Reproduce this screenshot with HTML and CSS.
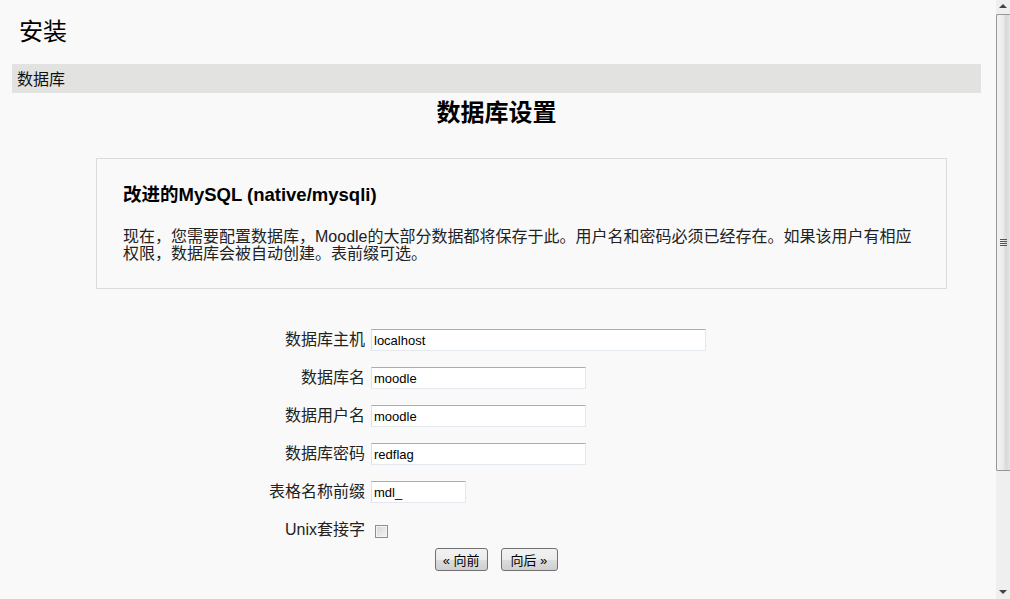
FILE: index.html
```html
<!DOCTYPE html>
<html lang="zh">
<head>
  <meta charset="UTF-8">
  <title>安装</title>
  <link rel="stylesheet" href="styles.css">
</head>
<body>
<div class="window">
  <div class="page">
    <h1 class="title">安装</h1>
    <div class="stage">数据库</div>
    <h2 class="heading">数据库设置</h2>

    <div class="info">
      <h3>改进的MySQL (native/mysqli)</h3>
      <p>现在，您需要配置数据库，Moodle的大部分数据都将保存于此。用户名和密码必须已经存在。如果该用户有相应权限，数据库会被自动创建。表前缀可选。</p>
    </div>

    <form class="dbform">
      <label for="dbhost">数据库主机</label>
      <div><input id="dbhost" class="w-long" type="text" value="localhost"></div>
      <label for="dbname">数据库名</label>
      <div><input id="dbname" class="w-mid" type="text" value="moodle"></div>
      <label for="dbuser">数据用户名</label>
      <div><input id="dbuser" class="w-mid" type="text" value="moodle"></div>
      <label for="dbpass">数据库密码</label>
      <div><input id="dbpass" class="w-mid" type="text" value="redflag"></div>
      <label for="prefix">表格名称前缀</label>
      <div><input id="prefix" class="w-short" type="text" value="mdl_"></div>
      <label for="socket">Unix套接字</label>
      <div><input id="socket" class="check" type="checkbox"></div>
    </form>

    <div class="buttons">
      <button type="button" class="prev">« 向前</button>
      <button type="button" class="next">向后 »</button>
    </div>
  </div>

  <div class="scrollbar">
    <div class="arrow up"></div>
    <div class="thumb"><span class="grip"></span></div>
    <div class="track"></div>
    <div class="arrow down"></div>
  </div>
</div>
</body>
</html>
```

FILE: styles.css
```css
html, body {
  margin: 0;
  height: 100%;
}
body {
  font-family: "Liberation Sans", "Noto Sans CJK SC", sans-serif;
  color: #222;
  background-color: #f9f9f9;
}
.window {
  display: flex;
  height: 599px;
  overflow: hidden;
}
.page {
  flex: 1;
  padding: 0 15px 0 12px;
}
.title {
  margin: 16px 0 0 7px;
  font-family: "Noto Sans CJK SC", sans-serif;
  font-size: 24px;
  font-weight: normal;
  line-height: 28px;
  color: #000;
}
.stage {
  margin-top: 20px;
  height: 29px;
  line-height: 29px;
  padding-left: 5px;
  background-color: #e2e2e1;
  font-family: "Noto Sans CJK SC", sans-serif;
  font-size: 16px;
  color: #111;
}
.heading {
  margin: 4px 0 0;
  text-align: center;
  font-family: "Noto Sans CJK SC", sans-serif;
  font-size: 24px;
  font-weight: bold;
  line-height: 28px;
  color: #000;
}
.info {
  margin: 33px 0 0 84px;
  width: 797px;
  padding: 25px 26px 26px 26px;
  border: 1px solid #dcdcdc;
}
.info h3 {
  margin: 0;
  font-size: 18.5px;
  line-height: 22px;
  color: #000;
}
.info p {
  margin: 22px 0 0;
  font-size: 16px;
  line-height: 17px;
}
.dbform {
  margin-top: 40px;
  display: grid;
  grid-template-columns: 353px 1fr;
  column-gap: 6px;
  row-gap: 16px;
  align-items: center;
}
.dbform label {
  text-align: right;
  font-size: 16px;
  line-height: 22px;
}
.dbform div {
  display: flex;
  height: 22px;
  align-items: center;
}
.dbform input[type="text"] {
  box-sizing: border-box;
  height: 22px;
  margin: 0;
  padding: 0 2px;
  border: 1px solid #e3e9ef;
  border-top-color: #abadb3;
  border-left-color: #dbdfe6;
  background: #fff;
  font-family: "Liberation Sans", sans-serif;
  font-size: 13px;
  color: #000;
  outline: none;
}
.w-long { width: 335px; }
.w-mid { width: 215px; }
.w-short { width: 95px; }
.check {
  appearance: none;
  -webkit-appearance: none;
  box-sizing: border-box;
  width: 13px;
  height: 13px;
  margin: 2px 0 0 4px;
  border: 1px solid #8e8f8f;
  background: linear-gradient(135deg, #d6d6d6, #f4f4f4);
  box-shadow: inset 0 0 0 1px #f4f4f4;
}
.buttons {
  margin-top: 7px;
  display: flex;
  justify-content: center;
  gap: 13px;
}
.buttons button {
  height: 23px;
  border: 1px solid #707070;
  border-radius: 3px;
  background: linear-gradient(#f2f2f2 0%, #ebebeb 50%, #dddddd 51%, #cfcfcf 100%);
  font-family: "Liberation Sans", "Noto Sans CJK SC", sans-serif;
  font-size: 13px;
  color: #000;
}
.buttons .prev {
  padding: 0 7px 0 7px;
}
.buttons .next {
  padding: 0 10px 0 9px;
}
.scrollbar {
  width: 14px;
  display: flex;
  flex-direction: column;
  background-color: #efefef;
}
.arrow {
  height: 14px;
  position: relative;
}
.arrow::after {
  content: "";
  position: absolute;
  left: 3px;
  border-left: 4px solid transparent;
  border-right: 4px solid transparent;
}
.arrow.up::after {
  top: 4px;
  border-bottom: 4px solid #444;
}
.arrow.down::after {
  bottom: 5px;
  border-top: 4px solid #444;
}
.thumb {
  height: 457px;
  box-sizing: border-box;
  border: 1px solid #979797;
  border-right: none;
  border-radius: 2px 0 0 2px;
  background: linear-gradient(to right, #f3f3f3 0%, #ececec 45%, #d8d8d8 70%, #e6e6e6 100%);
  display: flex;
  align-items: center;
  justify-content: center;
}
.grip {
  width: 7px;
  height: 7px;
  background: repeating-linear-gradient(#555 0 1px, transparent 1px 2px);
}
.track {
  flex: 1;
}
```
